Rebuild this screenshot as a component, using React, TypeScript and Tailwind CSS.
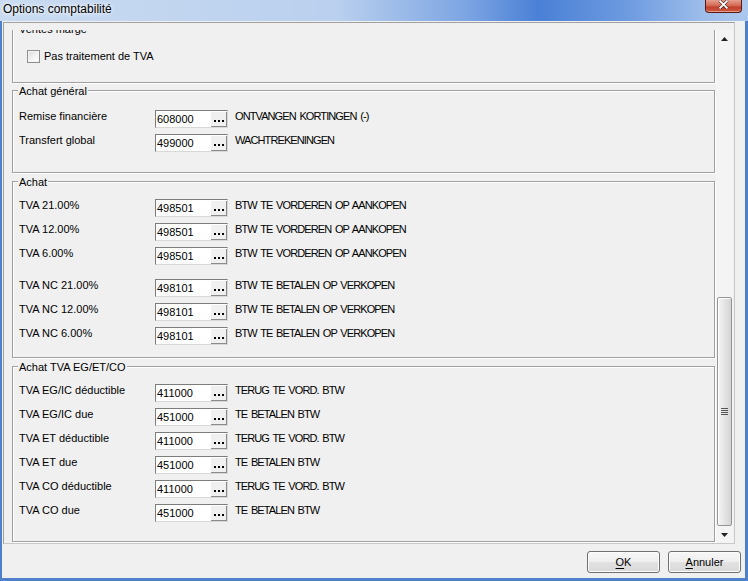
import React from 'react';

type Row = { label: string; code: string; desc: string };

const achatGeneral: Row[] = [
  { label: 'Remise financière', code: '608000', desc: 'ONTVANGEN KORTINGEN (-)' },
  { label: 'Transfert global', code: '499000', desc: 'WACHTREKENINGEN' },
];

const achatDeductible: Row[] = [
  { label: 'TVA 21.00%', code: '498501', desc: 'BTW TE VORDEREN OP AANKOPEN' },
  { label: 'TVA 12.00%', code: '498501', desc: 'BTW TE VORDEREN OP AANKOPEN' },
  { label: 'TVA 6.00%', code: '498501', desc: 'BTW TE VORDEREN OP AANKOPEN' },
];

const achatNC: Row[] = [
  { label: 'TVA NC 21.00%', code: '498101', desc: 'BTW TE BETALEN OP VERKOPEN' },
  { label: 'TVA NC 12.00%', code: '498101', desc: 'BTW TE BETALEN OP VERKOPEN' },
  { label: 'TVA NC 6.00%', code: '498101', desc: 'BTW TE BETALEN OP VERKOPEN' },
];

const achatEG: Row[] = [
  { label: 'TVA EG/IC déductible', code: '411000', desc: 'TERUG TE VORD. BTW' },
  { label: 'TVA EG/IC due', code: '451000', desc: 'TE BETALEN BTW' },
  { label: 'TVA ET déductible', code: '411000', desc: 'TERUG TE VORD. BTW' },
  { label: 'TVA ET due', code: '451000', desc: 'TE BETALEN BTW' },
  { label: 'TVA CO déductible', code: '411000', desc: 'TERUG TE VORD. BTW' },
  { label: 'TVA CO due', code: '451000', desc: 'TE BETALEN BTW' },
];

function GroupBox({ title, className, children }: { title: string; className: string; children?: React.ReactNode }) {
  return (
    <div
      className={`relative ml-[8px] w-[703px] flex-none border border-[#a0a0a0] shadow-[inset_1px_1px_0_#fff,1px_1px_0_#fff] ${className}`}
    >
      <span className="absolute -top-[6px] left-[5px] bg-[#f0f0f0] px-[1px] leading-[13px]">{title}</span>
      {children}
    </div>
  );
}

function AccountRow({ row }: { row: Row }) {
  return (
    <div className="flex h-[18px] items-start">
      <div className="w-[136px] leading-[12px]">{row.label}</div>
      <div className="flex h-[18px] w-[73px] border border-t-[#7d7d7d] border-l-[#7d7d7d] border-r-[#d8d8d8] border-b-[#d8d8d8] bg-white">
        <span className="flex-1 pl-[1px] leading-[16px]">{row.code}</span>
        <span className="flex h-[16px] w-[17px] items-center justify-center gap-[2px] bg-[#f0f0f0] pt-[3px] shadow-[inset_1px_1px_0_#fff,inset_-1px_-1px_0_#8a8a8a,inset_0_0_0_1px_#c8c8c8]">
          <i className="block h-[2px] w-[2px] bg-black" />
          <i className="block h-[2px] w-[2px] bg-black" />
          <i className="block h-[2px] w-[2px] bg-black" />
        </span>
      </div>
      <div className="ml-[7px] leading-[12px] tracking-[-0.9px] [word-spacing:1.5px]">{row.desc}</div>
    </div>
  );
}

function Scrollbar() {
  return (
    <div className="flex w-[17px] flex-none flex-col bg-[#f4f4f4]">
      <div className="flex h-[17px] items-center justify-center">
        <svg width="7" height="4" viewBox="0 0 7 4">
          <path d="M3.5 0 L7 4 L0 4 Z" fill="#222" />
        </svg>
      </div>
      <div className="flex-1" />
      <div className="mx-[1px] flex h-[229px] items-center justify-center rounded-[2px] border border-[#959595] bg-[linear-gradient(to_right,#f5f5f5_0%,#e6e6e6_45%,#d4d4d4_100%)] shadow-[inset_1px_1px_0_#fff]">
        <div className="flex flex-col gap-[1px]">
          <i className="block h-[1px] w-[7px] bg-[#555]" />
          <i className="block h-[1px] w-[7px] bg-[#555]" />
          <i className="block h-[1px] w-[7px] bg-[#555]" />
          <i className="block h-[1px] w-[7px] bg-[#555]" />
        </div>
      </div>
      <div className="flex h-[17px] items-center justify-center">
        <svg width="7" height="4" viewBox="0 0 7 4">
          <path d="M0 0 L7 0 L3.5 4 Z" fill="#222" />
        </svg>
      </div>
    </div>
  );
}

function WinButton({ first, rest }: { first: string; rest: string }) {
  return (
    <button className="h-[22px] w-[73px] rounded-[3px] border border-[#707070] bg-[linear-gradient(to_bottom,#f7f7f7_0%,#eeeeee_50%,#e2e2e2_51%,#d9d9d9_100%)] text-[11px] leading-[20px] shadow-[inset_0_0_0_1px_#fcfcfc]">
      <span className="underline underline-offset-[2px]">{first}</span>
      {rest}
    </button>
  );
}

export default function App() {
  return (
    <div className="flex h-[581px] w-[748px] flex-col overflow-hidden bg-[#4f80cc] font-['Liberation_Sans',Arial,sans-serif] text-[11px] text-black">
      {/* title bar */}
      <div className="flex h-[21px] flex-none items-start justify-between bg-[linear-gradient(to_right,#c9dbf1_0%,#bad0ee_45%,#7ea6e3_62%,#4a80d6_72%,#6e9be0_84%,#9dbdea_94%,#adc8ee_100%)]">
        <span className="pl-[3px] text-[12px] leading-[18px] [text-shadow:0_0_6px_#fff,0_0_3px_#fff]">Options comptabilité</span>
        <div className="mr-[6px] flex h-[13px] w-[37px] items-center justify-center rounded-b-[4px] border border-t-0 border-[#5a1a12] bg-[linear-gradient(to_bottom,#e7a090_0%,#d46a55_45%,#c0402c_60%,#cc5a44_100%)] shadow-[inset_0_-1px_0_#e99a88]">
          <svg width="11" height="9" viewBox="0 0 11 9" className="-mt-[4px]">
            <path d="M1.5 0.5 L9.5 8.5 M9.5 0.5 L1.5 8.5" stroke="#3a0d08" strokeWidth="3" />
            <path d="M1.5 0.5 L9.5 8.5 M9.5 0.5 L1.5 8.5" stroke="#fff" strokeWidth="1.8" />
          </svg>
        </div>
      </div>

      {/* client area */}
      <div className="mb-[3px] ml-[2px] mr-[3px] flex flex-1 flex-col bg-[#f0f0f0]">
        <div className="ml-[1px] mt-[1px] flex h-[522px] w-[732px] flex-col border border-[#a0a0a0] border-b-[#c8c8c8] border-r-[#c8c8c8]">
          <div className="h-[7px] flex-none" />
          <div className="flex min-h-0 flex-1">
            <div className="flex w-[712px] flex-none flex-col overflow-hidden">
              <GroupBox title="Ventes marge" className="-mt-[2px] h-[55px] pt-[21px]">
                <div className="flex items-center pl-[14px]">
                  <span className="h-[13px] w-[13px] border border-[#8f8f8f] bg-[linear-gradient(135deg,#dcdcdc_0%,#f6f6f6_60%,#ffffff_100%)] shadow-[inset_0_0_0_1px_#f4f4f4]" />
                  <span className="ml-[4px] leading-[13px]">Pas traitement de TVA</span>
                </div>
              </GroupBox>

              <GroupBox title="Achat général" className="mt-[7px] h-[83px] pl-[6px] pt-[19px]">
                <div className="flex flex-col gap-[6px]">
                  {achatGeneral.map((r) => (
                    <AccountRow key={r.label} row={r} />
                  ))}
                </div>
              </GroupBox>

              <GroupBox title="Achat" className="mt-[8px] h-[177px] pl-[6px] pt-[17px]">
                <div className="flex flex-col gap-[6px]">
                  {achatDeductible.map((r) => (
                    <AccountRow key={r.label} row={r} />
                  ))}
                </div>
                <div className="mt-[14px] flex flex-col gap-[6px]">
                  {achatNC.map((r) => (
                    <AccountRow key={r.label} row={r} />
                  ))}
                </div>
              </GroupBox>

              <GroupBox title="Achat TVA EG/ET/CO" className="mt-[8px] h-[176px] pl-[6px] pt-[17px]">
                <div className="flex flex-col gap-[6px]">
                  {achatEG.map((r) => (
                    <AccountRow key={r.label} row={r} />
                  ))}
                </div>
              </GroupBox>
            </div>
            <Scrollbar />
          </div>
        </div>

        <div className="mt-[7px] flex justify-end gap-[8px] pr-[4px]">
          <WinButton first="O" rest="K" />
          <WinButton first="A" rest="nnuler" />
        </div>
      </div>
    </div>
  );
}
